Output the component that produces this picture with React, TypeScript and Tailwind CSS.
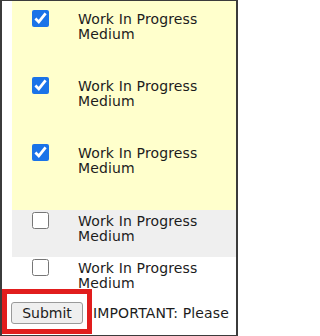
const rows = [
  { id: 1, checked: true, tone: "yellow" },
  { id: 2, checked: true, tone: "yellow" },
  { id: 3, checked: true, tone: "yellow" },
  { id: 4, checked: false, tone: "grey" },
  { id: 5, checked: false, tone: "white" },
] as const;

const toneClass = {
  yellow: "h-[67px] bg-[#ffffcc] pt-[1px]",
  grey: "h-[47px] bg-[#efefef] pt-[2px]",
  white: "h-[45px] bg-white pt-[2px]",
};

function TaskRow({ checked, tone }: { checked: boolean; tone: keyof typeof toneClass }) {
  return (
    <div className={`grid grid-cols-[66px_1fr] items-start ${toneClass[tone]}`}>
      <div className="pl-[20px]">
        <input
          className="m-0 block h-[17px] w-[17px] accent-[#1a73e8]"
          defaultChecked={checked}
          type="checkbox"
        />
      </div>
      <div className="mt-[2px] tracking-[0.15px]">
        Work In Progress
        <br />
        Medium
      </div>
    </div>
  );
}

export default function App() {
  return (
    <div className="relative h-[336px] w-[238px] overflow-hidden border-x-2 border-y border-[#3b3b3b] bg-white font-['DejaVu_Sans',sans-serif] text-[14px] leading-[15px] text-[#1c1c1c]">
      <div className="ml-[10px]">
        <div className="h-[8px] bg-[#ffffcc]" />
        {rows.map((row) => (
          <TaskRow checked={row.checked} key={row.id} tone={row.tone} />
        ))}
      </div>

      <div className="flex h-[22px] items-center whitespace-nowrap pl-[9px]">
        <button
          className="flex h-[22px] w-[72px] shrink-0 items-center justify-center rounded-[3px] border border-[#9a9a9a] bg-[#efefef] text-[14px] leading-none text-[#1c1c1c]"
          type="button"
        >
          Submit
        </button>
        <span className="ml-[10px] tracking-[0.15px]">IMPORTANT: Please</span>
      </div>

      <div className="pointer-events-none absolute left-0 top-[288px] h-[45px] w-[90px] border-[5px] border-[#e11d1d]" />
    </div>
  );
}
